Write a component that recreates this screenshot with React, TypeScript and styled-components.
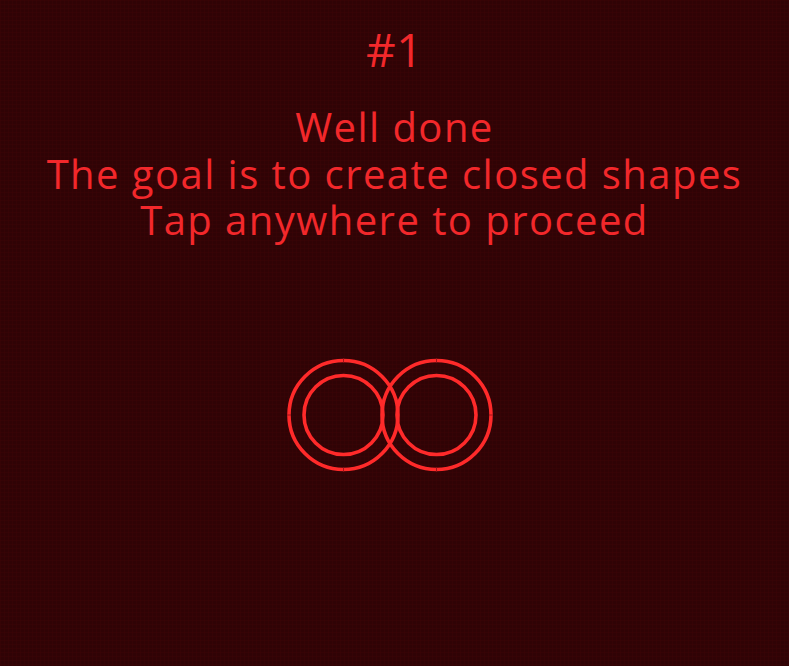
import React from "react";
import styled, { createGlobalStyle } from "styled-components";

const Global = createGlobalStyle`
  html, body { margin: 0; padding: 0; background: #300305; }
  #root { min-height: 100vh; }
`;

const Screen = styled.main`
  min-height: 666px;
  box-sizing: border-box;
  background-color: #300305;
  background-image:
    linear-gradient(rgba(255, 40, 40, 0.025) 1px, transparent 1px),
    linear-gradient(90deg, rgba(255, 40, 40, 0.025) 1px, transparent 1px);
  background-size: 4px 4px;
  display: flex;
  flex-direction: column;
  align-items: center;
  padding-top: 26px;
  font-family: "Open Sans", "Noto Sans", sans-serif;
  font-weight: 400;
  color: #f2282b;
  cursor: pointer;
`;

const Level = styled.h1`
  margin: 0;
  font-size: 46px;
  line-height: 46px;
  font-weight: 400;
  text-align: center;
  letter-spacing: 0.5px;
`;

const Message = styled.div`
  margin-top: 32px;
  display: flex;
  flex-direction: column;
  align-items: center;
`;

const Line = styled.span`
  display: block;
  font-size: 40px;
  line-height: 46.5px;
  letter-spacing: 1.45px;
  white-space: nowrap;
`;

const Figure = styled.svg`
  display: block;
  margin-top: 106px;
  margin-left: 5px;
`;

const STROKE = "#ff2a2a";
const TICK = "#a0141a";
const CY = 65;

const Ring: React.FC<{ cx: number; r: number }> = ({ cx, r }) => (
  <circle cx={cx} cy={CY} r={r} fill="none" stroke={STROKE} strokeWidth={3.6} />
);

const Ticks: React.FC<{ cx: number; r: number; sides: number[] }> = ({ cx, r, sides }) => (
  <g stroke={TICK} strokeWidth={1}>
    {sides.map((a) => {
      const rad = (a * Math.PI) / 180;
      return (
        <line
          key={a}
          x1={cx + Math.cos(rad) * (r - 2)}
          y1={CY + Math.sin(rad) * (r - 2)}
          x2={cx + Math.cos(rad) * (r + 2)}
          y2={CY + Math.sin(rad) * (r + 2)}
        />
      );
    })}
  </g>
);

export default function App() {
  const left = 56.5;
  const right = 149.5;
  return (
    <>
      <Global />
      <Screen>
        <Level>#1</Level>
        <Message>
          <Line>Well done</Line>
          <Line>The goal is to create closed shapes</Line>
          <Line>Tap anywhere to proceed</Line>
        </Message>
        <Figure width="220" height="130" viewBox="0 0 220 130">
          <Ring cx={left} r={54.5} />
          <Ring cx={left} r={39.5} />
          <Ring cx={right} r={54.5} />
          <Ring cx={right} r={39.5} />
          <Ticks cx={left} r={54.5} sides={[-90, 90, 180]} />
          <Ticks cx={right} r={54.5} sides={[-90, 90, 0]} />
        </Figure>
      </Screen>
    </>
  );
}
